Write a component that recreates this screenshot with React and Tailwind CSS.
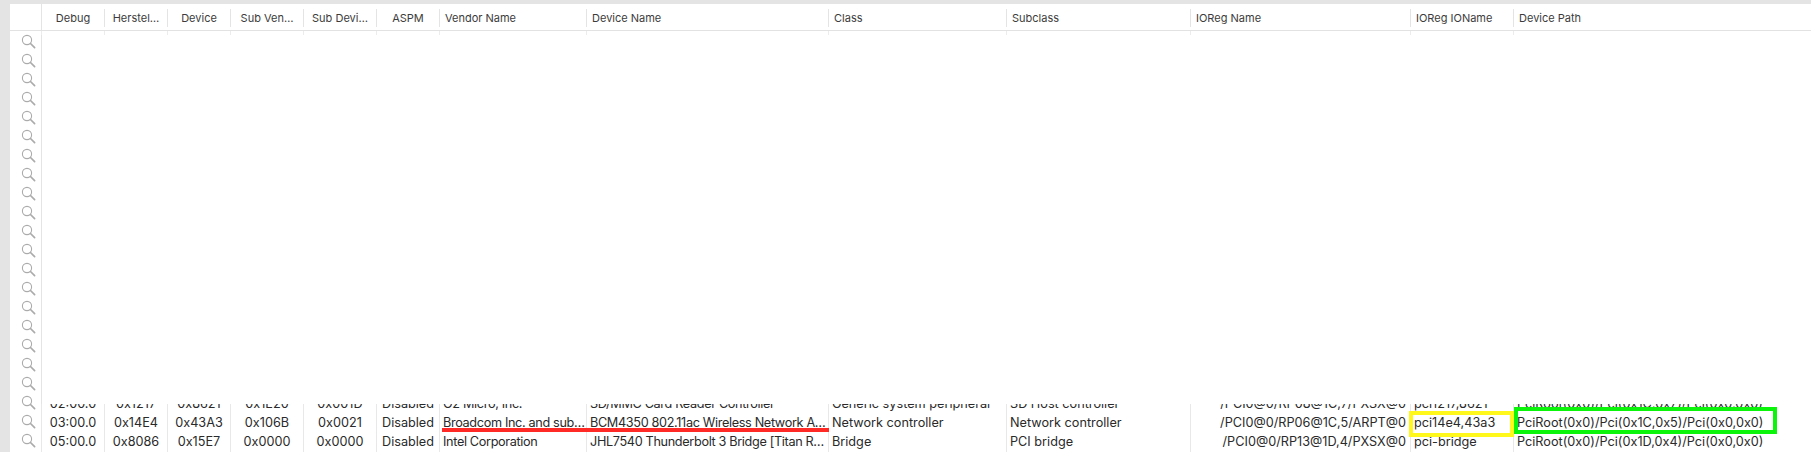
const GRID = "grid grid-cols-[63px_63px_63px_73px_73px_63px_147px_242px_178px_184px_220px_103px_1fr]";
const HEAD = [
  ["Debug", "c"], ["Herstel…", "c"], ["Device", "c"], ["Sub Ven…", "c"], ["Sub Devi…", "c"], ["ASPM", "c"],
  ["Vendor Name", "l"], ["Device Name", "l"], ["Class", "l"], ["Subclass", "l"], ["IOReg Name", "l"], ["IOReg IOName", "l"], ["Device Path", "l"],
];
const ALIGN = ["c", "c", "c", "c", "c", "c", "n", "n", "l", "l", "r", "l", "l"];
const ROWS = [
  ["02:00.0", "0x1217", "0x8621", "0x1E20", "0x001D", "Disabled", "O2 Micro, Inc.", "SD/MMC Card Reader Controller", "Generic system peripheral", "SD Host controller", "/PCI0@0/RP08@1C,7/PXSX@0", "pci1217,8621", "PciRoot(0x0)/Pci(0x1C,0x7)/Pci(0x0,0x0)"],
  ["03:00.0", "0x14E4", "0x43A3", "0x106B", "0x0021", "Disabled", "Broadcom Inc. and sub…", "BCM4350 802.11ac Wireless Network A…", "Network controller", "Network controller", "/PCI0@0/RP06@1C,5/ARPT@0", "pci14e4,43a3", "PciRoot(0x0)/Pci(0x1C,0x5)/Pci(0x0,0x0)"],
  ["05:00.0", "0x8086", "0x15E7", "0x0000", "0x0000", "Disabled", "Intel Corporation", "JHL7540 Thunderbolt 3 Bridge [Titan R…", "Bridge", "PCI bridge", "/PCI0@0/RP13@1D,4/PXSX@0", "pci-bridge", "PciRoot(0x0)/Pci(0x1D,0x4)/Pci(0x0,0x0)"],
];
const headAlign = { c: "justify-center", l: "justify-start pl-[5px]" };
const cellAlign = {
  c: "justify-center",
  l: "justify-start pl-[3px]",
  n: "justify-start pl-[3px] tracking-[-0.35px]",
  r: "justify-end pr-[4px]",
};

function Mag() {
  return (
    <div className="h-[19px] flex items-center justify-center pl-[6px]">
      <svg width="15" height="15" viewBox="0 0 15 15" fill="none" stroke="#ababab">
        <circle cx="6" cy="6" r="4.6" strokeWidth="1.1" />
        <line x1="9.5" y1="9.5" x2="13.6" y2="13.6" strokeWidth="1.7" strokeLinecap="round" />
      </svg>
    </div>
  );
}

export default function App() {
  return (
    <div className="relative w-[1811px] h-[452px] overflow-hidden bg-[#e4e4e4] pl-[10px] pt-[4px] text-[#2a2a2a] font-['Inter','Liberation_Sans',sans-serif]">
      <div className="bg-white h-[448px] flex">
        <div className="w-[32px] shrink-0 border-r border-[#e4e4e4] flex flex-col">
          <div className="h-[27px] shrink-0 border-b border-[#e2e2e2]" />
          <div className="pt-[1px]">
            {Array.from({ length: 22 }, (_, i) => <Mag key={i} />)}
          </div>
        </div>
        <div className="flex-1 flex flex-col min-w-0">
          <div className={`${GRID} h-[27px] shrink-0 border-b border-[#e2e2e2] text-[11px] text-[#3c3c3c] -ml-px`}>
            {HEAD.map(([t, a], i) => (
              <div key={i} className={`mt-[5px] h-[18px] border-l border-[#e4e4e4] flex items-center whitespace-nowrap ${headAlign[a]}`}>{t}</div>
            ))}
          </div>
          <div className={`${GRID} h-[4px] shrink-0 -ml-px`}>
            {HEAD.map((_, i) => <div key={i} className="border-l border-[#ececec]" />)}
          </div>
          <div className="flex-1" />
          <div className="h-[48px] shrink-0 overflow-hidden flex flex-col justify-end text-[12.7px] -ml-px">
            {ROWS.map((row, r) => (
              <div key={r} className={`${GRID} h-[19px] shrink-0`}>
                {row.map((t, i) => (
                  <div key={i} className={`border-l border-[#e8e8e8] pb-[1px] flex items-center whitespace-nowrap overflow-hidden ${cellAlign[ALIGN[i]]}`}>{t}</div>
                ))}
              </div>
            ))}
          </div>
        </div>
      </div>
      <div className="absolute left-[442px] top-[428px] w-[387px] h-[4px] bg-[#ff2a26]" />
      <div className="absolute left-[1409px] top-[411px] w-[105px] h-[26px] border-[4px] border-[#fff81a]" />
      <div className="absolute left-[1514px] top-[407px] w-[263px] h-[27px] border-[4px] border-[#0af50a]" />
    </div>
  );
}
